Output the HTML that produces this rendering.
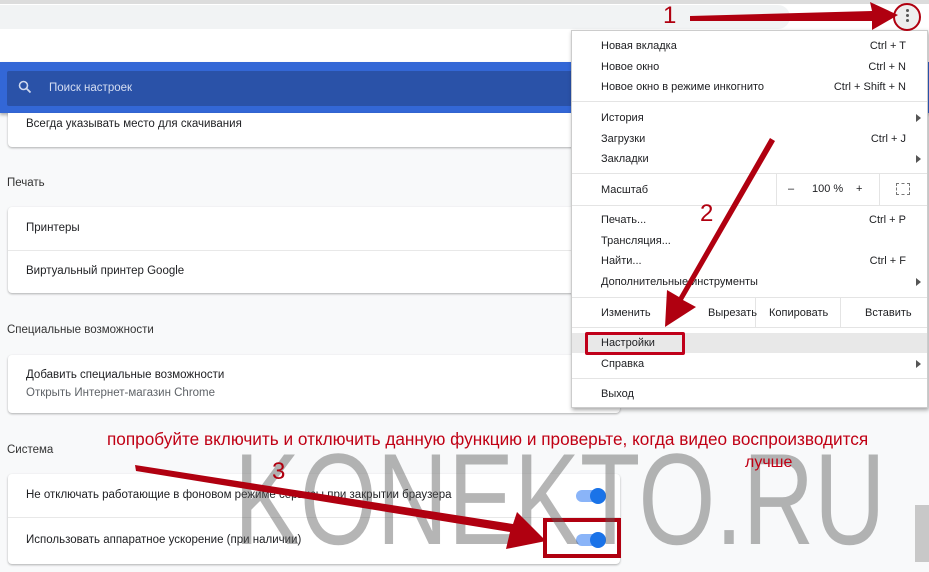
<!DOCTYPE html><html><head><meta charset="utf-8"><style>
*{margin:0;padding:0;box-sizing:border-box}
body{width:929px;height:562px;overflow:hidden;background:#f8f9fa;font-family:"Liberation Sans",sans-serif;position:relative;color:#202124}
.a{position:absolute}
.t{font-size:11.5px;white-space:nowrap}
.card{position:absolute;left:8px;width:612px;background:#fff;border-radius:4px;box-shadow:0 1px 2px rgba(0,0,0,.3)}
.row{position:absolute;left:18px;font-size:11.5px;white-space:nowrap}
.sep{position:absolute;left:0;right:0;height:1px;background:#e8e8e8}
.m{position:absolute;left:29px;font-size:11px;white-space:nowrap;color:#202124}
.k{position:absolute;right:21px;font-size:11px;white-space:nowrap}
.ms{position:absolute;left:0;right:0;height:1px;background:#e4e4e4}
.ar{position:absolute;right:6px;width:0;height:0;border-left:5px solid #555;border-top:4px solid transparent;border-bottom:4px solid transparent}
.tg{position:absolute;width:28px;height:12px;border-radius:6px;background:#8ab4f8}
.tg:after{content:"";position:absolute;right:-2px;top:-2px;width:16px;height:16px;border-radius:50%;background:#1a73e8}
</style></head><body>
<div class="a" style="left:0;top:0;width:929px;height:4px;background:#dcdcdc"></div>
<div class="a" style="left:0;top:4px;width:929px;height:26px;background:#fff"></div>
<div class="a" style="left:-20px;top:5px;width:810px;height:24px;background:#f1f3f4;border-radius:12px"></div>
<div class="a" style="left:0;top:30px;width:929px;height:32px;background:#fff"></div>
<div class="a" style="left:0;top:62px;width:929px;height:51px;background:#3367d6;box-shadow:0 2px 3px rgba(0,0,0,.3)"></div>
<div class="a" style="left:7px;top:71px;width:600px;height:35px;background:#2a52a8;border-radius:2px"></div>
<svg class="a" style="left:18px;top:80px" width="14" height="14" viewBox="0 0 14 14"><circle cx="5.5" cy="5.5" r="4" stroke="#cfd8ee" stroke-width="1.6" fill="none"/><path d="M8.5 8.5L12.5 12.5" stroke="#cfd8ee" stroke-width="1.8"/></svg>
<div class="a t" style="left:49px;top:82px;color:#d6def2">Поиск настроек</div>
<div class="card" style="top:113px;height:34px;border-radius:0 0 4px 4px"><div class="row" style="left:18px;top:5px">Всегда указывать место для скачивания</div></div>
<div class="a t" style="left:7px;top:177px;color:#333">Печать</div>
<div class="card" style="top:207px;height:86px"><div class="row" style="top:15px">Принтеры</div><div class="sep" style="top:43px"></div><div class="row" style="top:58px">Виртуальный принтер Google</div></div>
<div class="a t" style="left:7px;top:324px;color:#333">Специальные возможности</div>
<div class="card" style="top:355px;height:58px"><div class="row" style="top:14px">Добавить специальные возможности</div><div class="row" style="top:32px;color:#5f6368">Открыть Интернет-магазин Chrome</div></div>
<div class="a t" style="left:7px;top:444px;color:#333">Система</div>
<div class="card" style="top:474px;height:90px"><div class="row" style="top:15px">Не отключать работающие в фоновом режиме сервисы при закрытии браузера</div><div class="tg" style="left:568px;top:16px"></div><div class="sep" style="top:43px"></div><div class="row" style="top:60px">Использовать аппаратное ускорение (при наличии)</div><div class="tg" style="left:568px;top:60px"></div></div>
<div class="a" style="left:915px;top:505px;width:14px;height:57px;background:#c8c8c8"></div>
<div class="a" style="left:571px;top:30px;width:357px;height:378px;background:#fff;border:1px solid #ccc;box-shadow:1px 2px 4px rgba(0,0,0,.35)">
<div class="m" style="top:9px">Новая вкладка</div><div class="k" style="top:9px">Ctrl + T</div>
<div class="m" style="top:30px">Новое окно</div><div class="k" style="top:30px">Ctrl + N</div>
<div class="m" style="top:50px">Новое окно в режиме инкогнито</div><div class="k" style="top:50px">Ctrl + Shift + N</div>
<div class="ms" style="top:70px"></div>
<div class="m" style="top:81px">История</div><div class="ar" style="top:83px"></div>
<div class="m" style="top:102px">Загрузки</div><div class="k" style="top:102px">Ctrl + J</div>
<div class="m" style="top:122px">Закладки</div><div class="ar" style="top:124px"></div>
<div class="ms" style="top:142px"></div>
<div class="m" style="top:153px">Масштаб</div>
<div class="a" style="left:204px;top:142px;width:1px;height:32px;background:#e4e4e4"></div>
<div class="a" style="left:307px;top:142px;width:1px;height:32px;background:#e4e4e4"></div>
<div class="a t" style="left:216px;top:152px;font-size:11px">–</div><div class="a t" style="left:240px;top:152px;font-size:11px">100 %</div><div class="a t" style="left:284px;top:152px;font-size:11px">+</div>
<div class="a" style="left:324px;top:152px;width:14px;height:12px;border:1.5px dashed #777"></div>
<div class="ms" style="top:174px"></div>
<div class="m" style="top:183px">Печать...</div><div class="k" style="top:183px">Ctrl + P</div>
<div class="m" style="top:204px">Трансляция...</div>
<div class="m" style="top:224px">Найти...</div><div class="k" style="top:224px">Ctrl + F</div>
<div class="m" style="top:245px">Дополнительные инструменты</div><div class="ar" style="top:247px"></div>
<div class="ms" style="top:266px"></div>
<div class="m" style="top:276px">Изменить</div>
<div class="a" style="left:183px;top:266px;width:1px;height:30px;background:#e4e4e4"></div>
<div class="a" style="left:268px;top:266px;width:1px;height:30px;background:#e4e4e4"></div>
<div class="a t" style="left:136px;top:276px;font-size:11px">Вырезать</div><div class="a t" style="left:197px;top:276px;font-size:11px">Копировать</div><div class="a t" style="left:293px;top:276px;font-size:11px">Вставить</div>
<div class="ms" style="top:296px"></div>
<div class="a" style="left:0;top:302px;width:355px;height:20px;background:#e8e8e8"></div>
<div class="m" style="top:306px">Настройки</div>
<div class="m" style="top:327px">Справка</div><div class="ar" style="top:329px"></div>
<div class="ms" style="top:347px"></div>
<div class="m" style="top:357px">Выход</div>
</div>
<div class="a" style="left:585px;top:332px;width:100px;height:23px;border:3px solid #c0001a;border-radius:2px"></div>
<div class="a" style="left:543px;top:518px;width:78px;height:40px;border:4px solid #b00010"></div>
<div class="a" style="left:893px;top:3px;width:28px;height:28px;border:2px solid #b00010;border-radius:50%;background:#eee"></div>
<div class="a" style="left:906px;top:9px;width:3px;height:3px;background:#555;border-radius:50%;box-shadow:0 5px 0 #555,0 10px 0 #555"></div>
<div class="a" style="left:234px;top:434px;font-size:130px;color:rgba(90,90,90,.45);white-space:nowrap;line-height:1;transform:scaleX(0.76);transform-origin:0 0">KONEKTO.RU</div>
<div class="a" style="left:107px;top:429px;font-size:17.2px;color:#c00014;white-space:nowrap">попробуйте включить и отключить данную функцию и проверьте, когда видео воспроизводится</div>
<div class="a" style="left:745px;top:454px;font-size:16px;color:#c00014">лучше</div>
<div class="a" style="left:663px;top:2px;font-size:24px;color:#b00010">1</div>
<div class="a" style="left:700px;top:200px;font-size:24px;color:#b00010">2</div>
<div class="a" style="left:272px;top:458px;font-size:24px;color:#b00010">3</div>
<svg class="a" style="left:0;top:0" width="929" height="562">
<g fill="#b00010">
<polygon points="690,16 872,11 870,2 898,15 872,30 872,21 690,21"/>
<polygon points="770,138 775,141 683,300 696,307 665,327 667,290 679,297"/>
<polygon points="135,465 136,471 510,532 506,549 546,541 517,512 513,524"/>
</g></svg>
</body></html>
